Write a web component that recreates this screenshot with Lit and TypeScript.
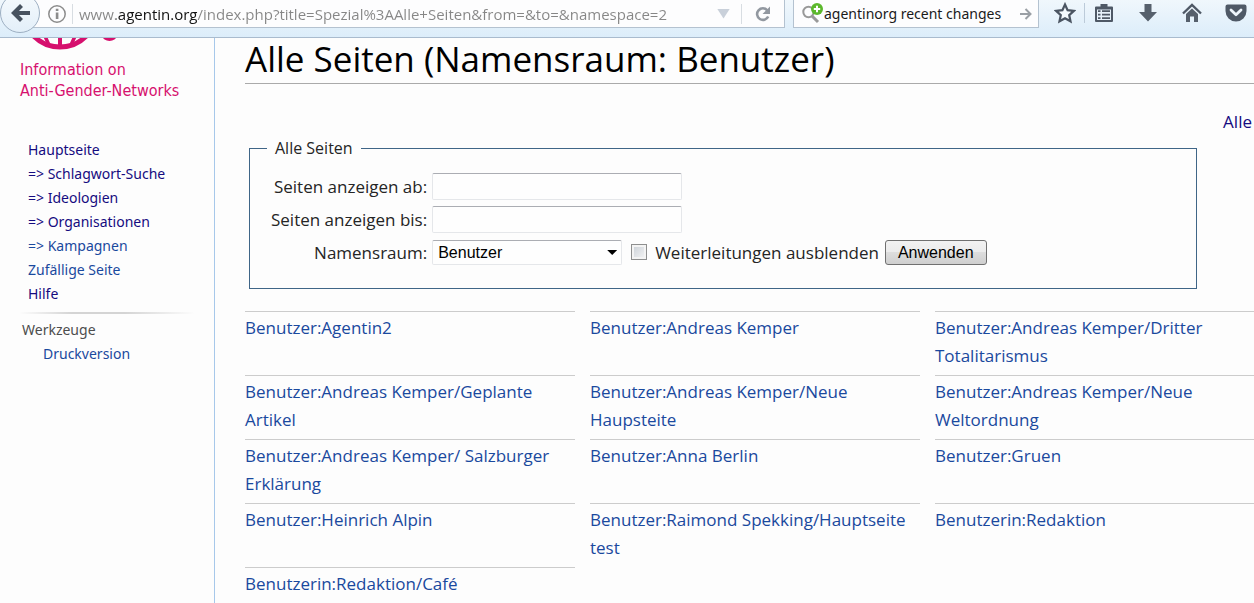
import { LitElement, html, css, svg } from "lit";
import { customElement, property } from "lit/decorators.js";

interface NavItem {
  text: string;
  visited: boolean;
}

const NAV: NavItem[] = [
  { text: "Hauptseite", visited: true },
  { text: "=> Schlagwort-Suche", visited: true },
  { text: "=> Ideologien", visited: true },
  { text: "=> Organisationen", visited: true },
  { text: "=> Kampagnen", visited: false },
  { text: "Zufällige Seite", visited: false },
  { text: "Hilfe", visited: true },
];

const PAGES: string[] = [
  "Benutzer:Agentin2",
  "Benutzer:Andreas Kemper",
  "Benutzer:Andreas Kemper/Dritter Totalitarismus",
  "Benutzer:Andreas Kemper/Geplante Artikel",
  "Benutzer:Andreas Kemper/Neue Haupsteite",
  "Benutzer:Andreas Kemper/Neue Weltordnung",
  "Benutzer:Andreas Kemper/ Salzburger Erklärung",
  "Benutzer:Anna Berlin",
  "Benutzer:Gruen",
  "Benutzer:Heinrich Alpin",
  "Benutzer:Raimond Spekking/Hauptseite test",
  "Benutzerin:Redaktion",
  "Benutzerin:Redaktion/Café",
];

const ICONS = {
  back: svg`<path d="M12.500 3.500 5 11l7.500 7.500M5 11h16" fill="none" stroke="#47525f" stroke-width="4.2"/>`,
  info: svg`<circle cx="11" cy="11" r="8.2" fill="none" stroke="#8c8c8c" stroke-width="1.5"/><path d="M9.8 9.5h2.6v6.5H9.8zM9.8 5.8h2.6v2.3H9.8z" fill="#8c8c8c"/>`,
  reload: svg`<path d="M15.3 7.3A5.8 5.8 0 1 0 16.2 13.5" fill="none" stroke="#9298a0" stroke-width="2.6"/><path d="M18 3.5v7.5h-7.5z" fill="#9298a0"/>`,
  search: svg`<circle cx="7.500" cy="9" r="5.2" fill="none" stroke="#999" stroke-width="2"/><path d="m11 13 6 6" stroke="#999" stroke-width="3"/><circle cx="16" cy="6" r="6" fill="#5cb82c"/><path d="M16 2.8v6.4M12.8 6h6.4" stroke="#fff" stroke-width="2"/>`,
  go: svg`<path d="M5 11h10M10.500 6l5 5-5 5" fill="none" stroke="#9a9fa5" stroke-width="2"/>`,
  star: svg`<path d="m11 2.500 2.600 5.700 6.200.7-4.600 4.200 1.300 6.200L11 16.200l-5.500 3.100 1.300-6.200L2.200 8.900l6.200-.7z" fill="#f4f9fd" stroke="#4b5562" stroke-width="2.200"/>`,
  list: svg`<path d="M3 4.500h4.500V2h7v2.500H19a1 1 0 0 1 1 1V19a1 1 0 0 1-1 1H3a1 1 0 0 1-1-1V5.500a1 1 0 0 1 1-1z" fill="#4f5966"/><path d="M4 7.500h14v10.500H4z" fill="#e6f1fa"/><path d="M5 9.200h2.500M5 12.700h2.500M5 16.200h2.500M9 9.200h8M9 12.700h8M9 16.200h8" stroke="#4f5966" stroke-width="1.700"/>`,
  download: svg`<path d="M7.500 2h7v8h5.500l-9 9.500L2 10h5.500z" fill="#56606c"/>`,
  home: svg`<path d="M2 11.500 11 3l9 8.500" fill="none" stroke="#4f5966" stroke-width="2.400"/><path d="M5 12l6-5.600L17 12v8h-4v-5.500H9V20H5z" fill="#56606c"/>`,
  pocket: svg`<path d="M2.500 2.500h17a2 2 0 0 1 2 2V9a10.500 10.500 0 0 1-21 0V4.500a2 2 0 0 1 2-2z" fill="#4f5966"/><path d="m6 8 5 4.700L16 8" fill="none" stroke="#eef5fb" stroke-width="2.800" stroke-linecap="round" stroke-linejoin="round"/>`,
};

const icon = (name: keyof typeof ICONS) =>
  html`<svg width="22" height="22" viewBox="0 0 22 22" aria-hidden="true">${ICONS[name]}</svg>`;

@customElement("browser-bar")
export class BrowserBar extends LitElement {
  static styles = css`
    :host {
      display: flex;
      flex: none;
      align-items: flex-start;
      box-sizing: border-box;
      height: 38px;
      border-bottom: 1px solid #a9bbce;
      background: linear-gradient(#f0f7fc, #dcedfa);
      font-family: "Noto Sans", sans-serif;
    }
    svg {
      display: block;
      flex: none;
    }
    button {
      border: 0;
      padding: 0;
      background: none;
    }
    .field {
      display: flex;
      align-items: center;
      box-sizing: border-box;
      height: 28px;
      border: 1px solid #b4c2d0;
      border-top: 0;
      background: #fdfdfe;
    }
    .address {
      flex: 1;
      margin-left: -20px;
      border-left: 0;
      padding-left: 26px;
    }
    .search {
      width: 246px;
      margin-left: 8px;
      padding: 0 1px 0 7px;
      box-sizing: border-box;
    }
    .back {
      z-index: 1;
      display: grid;
      place-items: center;
      box-sizing: border-box;
      width: 40px;
      height: 40px;
      margin-top: -7px;
      border: 1px solid #9dafc2;
      border-radius: 50%;
      background: linear-gradient(#f6fafd, #e3eff9);
    }
    input {
      flex: 1;
      min-width: 0;
      height: 24px;
      margin-left: 1px;
      border: 0;
      padding: 0;
      outline: 0;
      background: none;
      font: 14px "Noto Sans", sans-serif;
      color: #1a1a1a;
    }
    .url {
      margin-left: 6px;
      background: linear-gradient(90deg, #868686 37px, #111 37px, #111 118px, #868686 118px);
      -webkit-background-clip: text;
      background-clip: text;
      color: transparent;
      font: 15px "Open Sans", sans-serif;
    }
    .line {
      width: 1px;
      height: 20px;
      margin-left: 4px;
      background: #d8dde2;
    }
    .drop {
      width: 13px;
      height: 10px;
      margin-right: 7px;
      background: #c9d0da;
      clip-path: polygon(0 0, 100% 0, 50% 100%);
    }
    .reload {
      margin: 0 10px;
    }
    .tools {
      display: flex;
      align-items: center;
      height: 26px;
      gap: 22px;
      padding: 0 6px 0 15px;
      margin-right: 1px;
    }
    .tools .line {
      margin: 0 -14px;
      background: #bccbd9;
    }
  `;

  render() {
    return html`
      <button class="back" aria-label="Zurück">${icon("back")}</button>
      <div class="field address">
        ${icon("info")}
        <span class="line"></span>
        <input
          class="url"
          aria-label="Adresse"
          value="www.agentin.org/index.php?title=Spezial%3AAlle+Seiten&from=&to=&namespace=2"
        />
        <button class="drop" aria-label="Verlauf"></button>
        <span class="line"></span>
        <button class="reload" aria-label="Neu laden">${icon("reload")}</button>
      </div>
      <div class="field search">
        ${icon("search")}
        <input aria-label="Suche" value="agentinorg recent changes" />
        <button aria-label="Suchen">${icon("go")}</button>
      </div>
      <div class="tools">
        <button aria-label="Lesezeichen">${icon("star")}</button>
        <span class="line"></span>
        <button aria-label="Leseliste">${icon("list")}</button>
        <button aria-label="Downloads">${icon("download")}</button>
        <button aria-label="Startseite">${icon("home")}</button>
        <button aria-label="Pocket">${icon("pocket")}</button>
      </div>
    `;
  }
}

@customElement("wiki-sidebar")
export class WikiSidebar extends LitElement {
  @property({ attribute: false }) items: NavItem[] = [];

  static styles = css`
    :host {
      flex: none;
      box-sizing: border-box;
      width: 215px;
      border-right: 1px solid #a7c8ea;
      font: 14px/24px "Noto Sans", sans-serif;
    }
    .logo {
      display: block;
      margin-left: 20px;
      color: #d6106e;
      font: 16px/21px "DejaVu Sans Condensed", "DejaVu Sans", sans-serif;
      text-decoration: none;
    }
    .globe {
      display: block;
      margin-bottom: 9px;
    }
    ul {
      margin: 0;
      padding: 0;
      list-style: none;
    }
    .main {
      margin: 37px 20px 0 20px;
      padding: 0 0 6px 8px;
      border-bottom: 2px solid;
      border-image: linear-gradient(90deg, #fdfdfd, #d4d4d4 30%, #d4d4d4 60%, #fdfdfd) 1;
    }
    h2 {
      margin: 4px 0 0 22px;
      color: #4d4d4d;
      font: inherit;
    }
    .tools {
      padding-left: 43px;
    }
    a {
      color: #1a499e;
      text-decoration: none;
    }
    .visited {
      color: #150b80;
    }
  `;

  render() {
    return html`
      <a class="logo" href="#">
        <svg class="globe" width="110" height="12" viewBox="0 0 110 12" aria-hidden="true">
          <g fill="none" stroke="#d6106e">
            <circle cx="40" cy="-28" r="37" stroke-width="5" />
            <path d="M40-5V9" stroke-width="4" />
            <path d="M24-4l5 11M56-4l-5 11" stroke-width="3.500" />
          </g>
          <ellipse cx="89.500" cy="-2" rx="7" ry="5" fill="#d6106e" />
        </svg>
        Information on<br />Anti-Gender-Networks
      </a>
      <ul class="main">
        ${this.items.map(
          (i) => html`<li><a href="#" class=${i.visited ? "visited" : "fresh"}>${i.text}</a></li>`
        )}
      </ul>
      <h2>Werkzeuge</h2>
      <ul class="tools">
        <li><a href="#">Druckversion</a></li>
      </ul>
    `;
  }
}

@customElement("app-root")
export class AppRoot extends LitElement {
  static styles = css`
    :host {
      display: flex;
      flex-direction: column;
      height: 100vh;
      overflow: hidden;
      background: #fdfdfd;
      color: #252525;
      font: 17px/28px "Open Sans", sans-serif;
    }
    .body {
      display: flex;
      flex: 1;
      min-height: 0;
    }
    main {
      flex: 1;
      min-width: 0;
      padding-left: 30px;
    }
    h1 {
      margin: 0;
      border-bottom: 1px solid #aaa;
      padding-bottom: 3px;
      color: #000;
      font-size: 35px;
      font-weight: 400;
      line-height: 42px;
    }
    a {
      color: #1a499e;
      text-decoration: none;
    }
    .all {
      margin: 24px 2px 0 0;
      text-align: right;
    }
    .all a {
      color: #150b80;
    }
    fieldset {
      margin: -2px 57px 0 4px;
      border: 1px solid #3f6587;
      padding: 11px 21px 22px;
    }
    legend {
      margin-left: -4px;
      padding: 0 8px;
      font-size: 16px;
    }
    .form {
      display: grid;
      grid-template-columns: auto 1fr;
      grid-auto-rows: 27px;
      align-items: center;
      gap: 6px 5px;
    }
    .name {
      text-align: right;
    }
    .row {
      display: flex;
      align-items: center;
    }
    .text,
    select {
      box-sizing: border-box;
      border: 1px solid #e5e7ea;
      border-top-color: #abadb3;
      border-radius: 2px;
      background: #fefefe;
      color: #000;
      font: 16px "Liberation Sans", sans-serif;
    }
    .text {
      width: 250px;
      height: 27px;
    }
    .select {
      display: grid;
      align-items: center;
    }
    .select > * {
      grid-area: 1 / 1;
    }
    select {
      width: 190px;
      height: 25px;
      padding: 0 5px;
      appearance: none;
    }
    .caret {
      justify-self: end;
      width: 10px;
      height: 5px;
      margin-right: 5px;
      background: #000;
      clip-path: polygon(0 0, 100% 0, 50% 100%);
      pointer-events: none;
    }
    .check {
      box-sizing: border-box;
      width: 16px;
      height: 16px;
      margin: 0 8px 2px 9px;
      border: 1px solid #8e8f8f;
      background: linear-gradient(135deg, #c9cfd6, #f6f6f6);
      box-shadow: inset 0 0 0 2px #f4f4f4;
      appearance: none;
    }
    .submit {
      height: 25px;
      margin-left: 6px;
      border: 1px solid #707070;
      border-radius: 3px;
      padding: 0 12px;
      background: linear-gradient(#f2f2f2, #ebebeb 50%, #dddddd 50%, #cfcfcf);
      color: #000;
      font: 16px "Liberation Sans", sans-serif;
    }
    .pages {
      display: grid;
      grid-template-columns: repeat(3, 1fr);
      column-gap: 15px;
      margin: 22px -11px 0 0;
      padding: 0;
      list-style: none;
    }
    .pages li {
      border-top: 1px solid #ccc;
      padding: 2px 0 5px;
    }
  `;

  render() {
    return html`
      <browser-bar></browser-bar>
      <div class="body">
        <wiki-sidebar .items=${NAV}></wiki-sidebar>
        <main>
          <h1>Alle Seiten (Namensraum: Benutzer)</h1>
          <div class="all"><a href="#">Alle</a></div>
          <fieldset>
            <legend>Alle Seiten</legend>
            <div class="form">
              <label class="name" for="from">Seiten anzeigen ab:</label>
              <input class="text" id="from" type="text" />
              <label class="name" for="to">Seiten anzeigen bis:</label>
              <input class="text" id="to" type="text" />
              <label class="name" for="ns">Namensraum:</label>
              <div class="row">
                <div class="select">
                  <select id="ns">
                    <option>Benutzer</option>
                  </select>
                  <span class="caret"></span>
                </div>
                <input class="check" id="hide" type="checkbox" />
                <label for="hide">Weiterleitungen ausblenden</label>
                <button class="submit">Anwenden</button>
              </div>
            </div>
          </fieldset>
          <ul class="pages">
            ${PAGES.map((p) => html`<li><a href="#">${p}</a></li>`)}
          </ul>
        </main>
      </div>
    `;
  }
}
